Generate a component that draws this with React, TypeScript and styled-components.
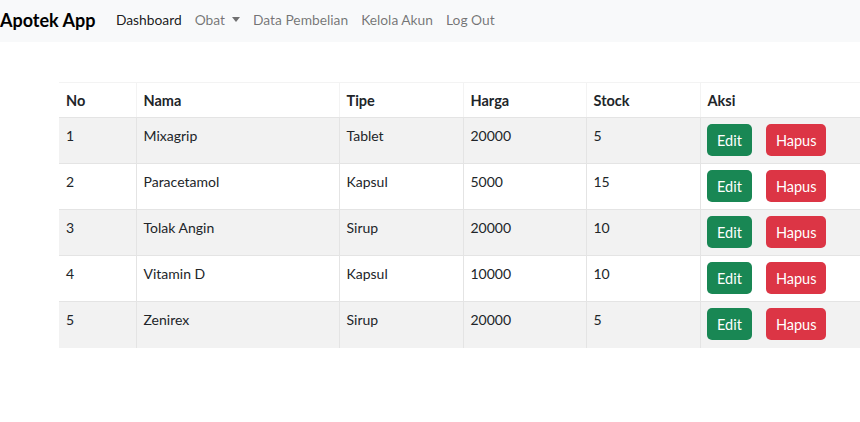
import React from "react";
import styled, { createGlobalStyle } from "styled-components";

const Global = createGlobalStyle`
  html, body { margin: 0; padding: 0; background: #fff; overflow: hidden; }
  body { font-family: Lato, "Noto Sans", sans-serif; color: #212529; }
`;

const Nav = styled.nav`
  height: 42px;
  box-sizing: border-box;
  padding-bottom: 3px;
  background: #f8f9fa;
  display: flex;
  align-items: center;
`;

const Brand = styled.span`
  font-weight: 700;
  font-size: 18px;
  color: #000;
  margin-right: 14px;
`;

const NavLink = styled.a<{ $active?: boolean }>`
  font-size: 13.8px;
  color: ${(p) => (p.$active ? "rgba(0,0,0,0.9)" : "rgba(0,0,0,0.55)")};
  padding: 0 6.5px;
  text-decoration: none;
  display: flex;
  align-items: center;
  white-space: nowrap;
`;

const Caret = styled.span`
  display: inline-block;
  margin-left: 7px;
  border-top: 5px solid rgba(0,0,0,0.55);
  border-left: 4.5px solid transparent;
  border-right: 4.5px solid transparent;
`;

const Main = styled.main`
  padding: 40px 0 0 59px;
`;

const Table = styled.table`
  border-collapse: collapse;
  width: 880px;
  table-layout: fixed;
  font-size: 14px;
  border-top: 1px solid #f3f3f3;
`;

const Th = styled.th<{ $w: number }>`
  width: ${(p) => p.$w}px;
  text-align: left;
  font-weight: 700;
  font-size: 14.5px;
  height: 35px;
  padding: 0 7px;
  box-sizing: border-box;
  border-left: 1px solid #f3f3f3;
  border-bottom: 1px solid #e4e4e4;
  vertical-align: middle;
  &:first-child { border-left: none; }
`;

const Tr = styled.tr<{ $striped: boolean }>`
  background: ${(p) => (p.$striped ? "#f2f2f2" : "#fff")};
`;

const Td = styled.td<{ $last?: boolean }>`
  height: 46px;
  box-sizing: border-box;
  padding: 7px 7px 6px;
  vertical-align: top;
  line-height: 22px;
  border-left: 1px solid #e4e4e4;
  border-bottom: ${(p) => (p.$last ? "none" : "1px solid #e4e4e4")};
  &:first-child { border-left: none; }
`;

const ActionCell = styled(Td)`
  padding-left: 6px;
`;

const Btn = styled.button<{ $variant: "edit" | "hapus" }>`
  font-family: inherit;
  font-size: 14.5px;
  height: 32px;
  margin-top: -1px;
  padding: 0 ${(p) => (p.$variant === "edit" ? "10.5px" : "9.5px")};
  border: none;
  border-radius: 5px;
  color: #fff;
  background: ${(p) => (p.$variant === "edit" ? "#198754" : "#dc3545")};
  margin-right: 14px;
  cursor: pointer;
`;

const cols = [
  { label: "No", w: 77 },
  { label: "Nama", w: 203 },
  { label: "Tipe", w: 124 },
  { label: "Harga", w: 123 },
  { label: "Stock", w: 114 },
  { label: "Aksi", w: 239 },
];

const rows = [
  ["1", "Mixagrip", "Tablet", "20000", "5"],
  ["2", "Paracetamol", "Kapsul", "5000", "15"],
  ["3", "Tolak Angin", "Sirup", "20000", "10"],
  ["4", "Vitamin D", "Kapsul", "10000", "10"],
  ["5", "Zenirex", "Sirup", "20000", "5"],
];

export default function App() {
  return (
    <>
      <Global />
      <Nav>
        <Brand>Apotek App</Brand>
        <NavLink $active>Dashboard</NavLink>
        <NavLink>
          Obat<Caret />
        </NavLink>
        <NavLink>Data Pembelian</NavLink>
        <NavLink>Kelola Akun</NavLink>
        <NavLink>Log Out</NavLink>
      </Nav>
      <Main>
        <Table>
          <thead>
            <tr>
              {cols.map((c) => (
                <Th key={c.label} $w={c.w}>
                  {c.label}
                </Th>
              ))}
            </tr>
          </thead>
          <tbody>
            {rows.map((r, i) => (
              <Tr key={r[0]} $striped={i % 2 === 0}>
                {r.map((v, j) => (
                  <Td key={j} $last={i === rows.length - 1}>
                    {v}
                  </Td>
                ))}
                <ActionCell $last={i === rows.length - 1}>
                  <Btn $variant="edit">Edit</Btn>
                  <Btn $variant="hapus">Hapus</Btn>
                </ActionCell>
              </Tr>
            ))}
          </tbody>
        </Table>
      </Main>
    </>
  );
}
